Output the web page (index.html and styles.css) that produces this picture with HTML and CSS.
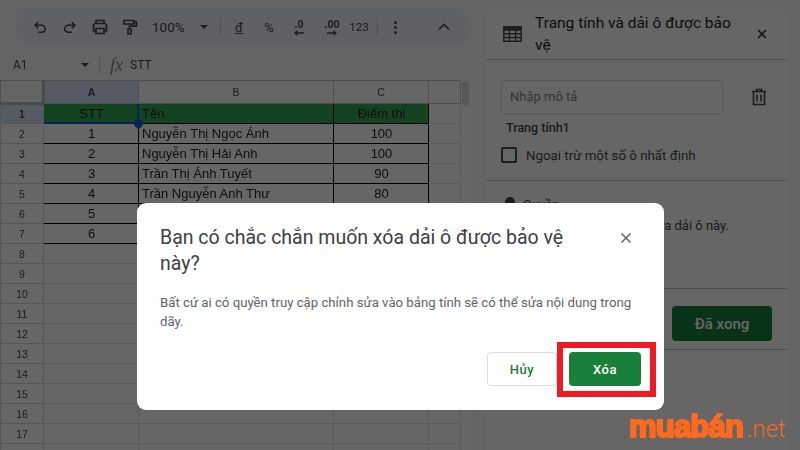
FILE: index.html
```html
<!DOCTYPE html>
<html lang="vi">
<head>
    <meta charset="UTF-8">
    <meta name="viewport" content="width=device-width, initial-scale=1.0">
    <title>Xóa dải ô được bảo vệ</title>
    <link rel="stylesheet" href="styles.css">
</head>
<body>
    <div class="app">
        <div class="sheet">
            <div class="toolbar">
                <span class="slot small"><svg viewBox="0 0 18 18"><path d="M7 3.5 3.5 7 7 10.5M4 7h7a3.500 3.500 0 0 1 0 8H7"/></svg></span>
                <span class="slot small"><svg viewBox="0 0 18 18"><path d="M11 3.5 14.5 7 11 10.5M14 7H7a3.500 3.500 0 0 0 0 8h4"/></svg></span>
                <span class="slot"><svg viewBox="0 0 18 18"><path d="M5 5V2.500h8V5M5 13H2.500V7.500A2 2 0 0 1 4.500 5.500h9a2 2 0 0 1 2 2V13H13M5 10.500h8v5H5z"/></svg></span>
                <span class="slot"><svg viewBox="0 0 18 18"><path d="M3 2.500h10v3.500H3zM13 4.200h2.500v4H8.500V11M7 11h3v5H7z"/></svg></span>
                <span class="zoom-level">100%</span>
                <span class="caret zoom-caret"></span>
                <span class="bar-line first"></span>
                <span class="slot text-tool under">đ</span>
                <span class="slot text-tool">%</span>
                <span class="slot dec"><b>.0</b><svg viewBox="0 0 12 6"><path d="M11 3H2M4.500.8 2 3l2.500 2.200"/></svg></span>
                <span class="slot dec wide"><b>.00</b><svg viewBox="0 0 12 6"><path d="M1 3h9M7.500.8 10 3 7.500 5.200"/></svg></span>
                <span class="num-tool">123</span>
                <span class="bar-line second"></span>
                <span class="more"><i></i><i></i><i></i></span>
                <span class="slot collapse"><svg viewBox="0 0 18 18"><path d="m4 11.500 5-5 5 5"/></svg></span>
            </div>

            <div class="formula">
                <span class="name-box">A1</span>
                <span class="caret"></span>
                <span class="formula-line"></span>
                <span class="fx">fx</span>
                <span class="formula-text">STT</span>
            </div>

            <div class="grid-wrap">
                <table class="grid">
                    <colgroup>
                        <col class="col-head"><col class="col-a"><col class="col-b"><col class="col-c"><col class="col-d">
                    </colgroup>
                    <thead>
                        <tr><th class="corner"></th><th class="active">A</th><th>B</th><th>C</th><th></th></tr>
                    </thead>
                    <tbody>
                        <tr class="head-row"><th class="active-row">1</th><td class="data center first selected">STT<span class="handle"></span></td><td class="data">Tên</td><td class="data center">Điểm thi</td><td></td></tr>
                        <tr><th>2</th><td class="data center first">1</td><td class="data">Nguyễn Thị Ngọc Ánh</td><td class="data center">100</td><td></td></tr>
                        <tr><th>3</th><td class="data center first">2</td><td class="data">Nguyễn Thị Hải Anh</td><td class="data center">100</td><td></td></tr>
                        <tr><th>4</th><td class="data center first">3</td><td class="data">Trần Thị Ánh Tuyết</td><td class="data center">90</td><td></td></tr>
                        <tr><th>5</th><td class="data center first">4</td><td class="data">Trần Nguyễn Anh Thư</td><td class="data center">80</td><td></td></tr>
                        <tr><th>6</th><td class="data center first">5</td><td class="data"></td><td class="data center"></td><td></td></tr>
                        <tr><th>7</th><td class="data center first">6</td><td class="data"></td><td class="data center"></td><td></td></tr>
                        <tr><th>8</th><td></td><td></td><td></td><td></td></tr>
                        <tr><th>9</th><td></td><td></td><td></td><td></td></tr>
                        <tr><th>10</th><td></td><td></td><td></td><td></td></tr>
                        <tr><th>11</th><td></td><td></td><td></td><td></td></tr>
                        <tr><th>12</th><td></td><td></td><td></td><td></td></tr>
                        <tr><th>13</th><td></td><td></td><td></td><td></td></tr>
                        <tr><th>14</th><td></td><td></td><td></td><td></td></tr>
                        <tr><th>15</th><td></td><td></td><td></td><td></td></tr>
                        <tr><th>16</th><td></td><td></td><td></td><td></td></tr>
                        <tr><th>17</th><td></td><td></td><td></td><td></td></tr>
                        <tr><th>18</th><td></td><td></td><td></td><td></td></tr>
                    </tbody>
                </table>
                <div class="scroll"><span class="thumb"></span></div>
            </div>
        </div>

        <aside class="side">
            <div class="side-head">
                <svg class="table-icon" viewBox="0 0 20 17"><path d="M0 0h20v17H0zM1.500 5v2.500h4.500V5zm6 0v2.500h5V5zm6.500 0v2.500h4.500V5zM1.500 9v2.500h4.500V9zm6 0v2.500h5V9zm6.500 0v2.500h4.500V9zM1.500 13v2.500h4.500V13zm6 0v2.500h5V13zm6.500 0v2.500h4.500V13z"/></svg>
                <h2>Trang tính và dải ô được bảo vệ</h2>
                <svg class="close" viewBox="0 0 12 12"><path d="m2 2 8 8M10 2l-8 8"/></svg>
            </div>
            <div class="side-form">
                <div class="desc-row">
                    <div class="desc-input">Nhập mô tả</div>
                    <svg class="trash" viewBox="0 0 16 18"><path d="M1 3.500h14M5.500 3.500V1.500h5v2M2.500 3.500v13h11v-13M6 6.500v7M10 6.500v7"/></svg>
                </div>
                <div class="sheet-name">Trang tính1</div>
                <label class="except"><span class="check"></span>Ngoại trừ một số ô nhất định</label>
            </div>
            <div class="side-perm">
                <div class="perm-title"><span class="lock"></span>Quyền</div>
                <p>Chỉ bạn có thể chỉnh sửa dải ô này.</p>
            </div>
            <div class="side-foot"><button class="done">Đã xong</button></div>
        </aside>
    </div>

    <div class="scrim">
        <div class="dialog">
            <div class="dialog-head">
                <h1>Bạn có chắc chắn muốn xóa dải ô được bảo vệ này?</h1>
                <svg class="dialog-close" viewBox="0 0 12 12"><path d="m1.500 1.500 9 9M10.500 1.500l-9 9"/></svg>
            </div>
            <p class="dialog-text">Bất cứ ai có quyền truy cập chỉnh sửa vào bảng tính sẽ có thể sửa nội dung trong dãy.</p>
            <div class="dialog-actions">
                <button class="btn-cancel">Hủy</button>
                <button class="btn-delete">Xóa</button>
                <span class="highlight"></span>
            </div>
        </div>
    </div>

    <div class="logo"><span class="logo-main">muabán</span><span class="logo-net">.net</span></div>
</body>
</html>
```

FILE: styles.css
```css
* {
    box-sizing: border-box;
}

html, body {
    margin: 0;
    height: 100%;
}

body {
    width: 800px;
    height: 450px;
    overflow: hidden;
    position: relative;
    background-color: #f9fbfd;
    font-family: "Liberation Sans", Arial, sans-serif;
    color: #1f1f1f;
}

.app {
    display: flex;
    height: 450px;
    filter: blur(0.4px);
}

.sheet {
    width: 471px;
    padding-top: 8px;
    flex-shrink: 0;
}

/* toolbar */
.toolbar {
    display: flex;
    align-items: center;
    height: 37px;
    margin-left: 15px;
    padding: 1px 0 0 10px;
    border-radius: 18px;
    background-color: #edf2fa;
    color: #444746;
}

.slot {
    display: flex;
    align-items: center;
    justify-content: center;
    width: 30px;
    flex-shrink: 0;
}

.slot svg {
    width: 18px;
    height: 18px;
    fill: none;
    stroke: #444746;
    stroke-width: 1.7;
}

.slot.small svg {
    width: 16px;
    height: 16px;
}

.zoom-level {
    margin-left: 7px;
    width: 36px;
    font-family: Roboto, sans-serif;
    font-size: 13.5px;
}

.caret {
    width: 0;
    height: 0;
    border-left: 4px solid transparent;
    border-right: 4px solid transparent;
    border-top: 4px solid #444746;
}

.zoom-caret {
    margin-left: 12px;
}

.bar-line {
    width: 1px;
    height: 19px;
    background-color: #c7c7c7;
}

.bar-line.first {
    margin-left: 12px;
    margin-right: 3px;
}

.bar-line.second {
    margin-left: 6px;
}

.text-tool {
    font-family: Roboto, sans-serif;
    font-size: 13px;
}

.under {
    text-decoration: underline;
}

.dec {
    position: relative;
    flex-direction: column;
}

.dec.wide {
    margin-left: 3px;
}

.dec b {
    font-size: 11px;
    line-height: 11px;
    font-weight: 700;
}

.dec svg {
    width: 12px;
    height: 6px;
    stroke-width: 1.300;
}

.num-tool {
    width: 24px;
    text-align: center;
    font-family: Roboto, sans-serif;
    font-size: 11.500px;
}

.more {
    display: flex;
    flex-direction: column;
    gap: 2px;
    margin-left: 16px;
}

.more i {
    width: 3px;
    height: 3px;
    border-radius: 50%;
    background-color: #444746;
}

.collapse {
    margin-left: 32px;
}

/* formula bar */
.formula {
    display: flex;
    align-items: center;
    height: 30px;
    margin-top: 5px;
    padding-left: 13px;
    font-size: 12px;
    color: #444746;
}

.name-box {
    width: 68px;
    font-family: Roboto, sans-serif;
}

.formula-line {
    width: 1px;
    height: 16px;
    margin-left: 10px;
    background-color: #c7c7c7;
}

.fx {
    width: 20px;
    margin-left: 10px;
    font-family: "Liberation Serif", serif;
    font-style: italic;
    font-size: 18px;
    color: #888;
}

.formula-text {
    font-family: Roboto, sans-serif;
}

/* grid */
.grid-wrap {
    display: flex;
    align-items: flex-start;
}

.grid {
    width: 460px;
    table-layout: fixed;
    border-collapse: collapse;
    background-color: #fff;
}

.col-head { width: 43px; }
.col-a { width: 95px; }
.col-b { width: 195px; }
.col-c { width: 95px; }
.col-d { width: 32px; }

.grid th, .grid td {
    padding: 0 2px;
    border: 1px solid #e1e1e1;
    height: 20px;
    white-space: nowrap;
    overflow: hidden;
    font-size: 13px;
    line-height: 18px;
}

.grid thead th {
    height: 23px;
    font-size: 10.500px;
    font-weight: 400;
    color: #444746;
    border-color: #c4c7c5;
}

.grid tbody th {
    font-size: 10.500px;
    font-weight: 400;
    color: #444746;
    border-color: #d5d5d5;
    background-color: #fff;
}

.grid .corner {
    background-color: #f8f9fa;
    border-right: 3px solid #bbb;
    border-bottom: 3px solid #bbb;
}

.grid .active {
    background-color: #d3e3fd;
    font-weight: 700;
}

.grid .active-row {
    background-color: #d3e3fd;
    font-weight: 700;
}

.grid td.data {
    border: 1px solid #000;
    padding-left: 3px;
}

.grid td.first {
    border-left-color: #d5d5d5;
}

.head-row td.data {
    border-top-color: #c4c7c5;
    background-color: #34a853;
}

.grid td.center {
    text-align: center;
}

.grid td.selected {
    position: relative;
    overflow: visible;
    box-shadow: inset -1px -1px 0 #0b57d0;
    border-right-color: #0b57d0;
    border-bottom-color: #0b57d0;
}

.handle {
    position: absolute;
    right: -5px;
    bottom: -5px;
    width: 9px;
    height: 9px;
    border-radius: 50%;
    background-color: #0b57d0;
    z-index: 1;
}

.scroll {
    width: 11px;
    height: 370px;
    padding: 1px 3px 0 1px;
    background-color: #fff;
}

.thumb {
    display: block;
    width: 7px;
    height: 25px;
    border-radius: 4px;
    background-color: #dadce0;
}

/* side panel */
.side {
    width: 301px;
    height: 442px;
    margin: 8px 0 0 15px;
    border-radius: 8px 8px 0 0;
    background-color: #fff;
}

.side-head {
    display: flex;
    align-items: center;
    height: 52px;
    padding: 0 19px 0 17px;
    border-bottom: 1px solid #c4c7c5;
}

.table-icon {
    width: 19px;
    height: 16px;
    margin-right: 13px;
    flex-shrink: 0;
    fill: #444746;
    fill-rule: evenodd;
}

.side-head h2 {
    margin: 0;
    width: 205px;
    font-family: Roboto, sans-serif;
    font-size: 15.500px;
    font-weight: 400;
    line-height: 22px;
}

.close {
    width: 12px;
    height: 12px;
    margin-left: 16px;
    fill: none;
    stroke: #1f1f1f;
    stroke-width: 1.500;
}

.side-form {
    height: 121px;
    padding: 20px 15px 0;
    border-bottom: 1px solid #c4c7c5;
}

.desc-row {
    display: flex;
    align-items: center;
}

.desc-input {
    width: 222px;
    height: 34px;
    padding-left: 8px;
    border: 1px solid #dadce0;
    border-radius: 4px;
    font-family: Roboto, sans-serif;
    font-size: 13px;
    line-height: 31px;
    color: #80868b;
}

.trash {
    width: 16px;
    height: 18px;
    margin-left: 28px;
    fill: none;
    stroke: #444746;
    stroke-width: 1.600;
}

.sheet-name {
    margin: 5px 0 0 5px;
    font-family: Roboto, sans-serif;
    font-size: 12.500px;
    font-weight: 500;
    line-height: 18px;
    color: #444746;
}

.except {
    display: flex;
    align-items: center;
    margin-top: 10px;
    font-family: Roboto, sans-serif;
    font-size: 13.300px;
    color: #444746;
}

.check {
    width: 16px;
    height: 16px;
    margin-right: 9px;
    border: 2px solid #444746;
    border-radius: 2px;
}

.side-perm {
    height: 108px;
    padding: 15px 19px 0;
    border-bottom: 1px solid #c4c7c5;
    font-family: Roboto, sans-serif;
    font-size: 13px;
    color: #444746;
}

.perm-title {
    display: flex;
    align-items: center;
    gap: 8px;
    height: 16px;
}

.lock {
    width: 10px;
    height: 14px;
    border-radius: 5px;
    background-color: #444746;
}

.side-perm p {
    margin: 6px 0 0;
    width: 224px;
    white-space: nowrap;
    text-align: right;
}

.side-foot {
    display: flex;
    justify-content: flex-end;
    align-items: flex-start;
    height: 61px;
    padding: 17px 15px 0 0;
    border-bottom: 1px solid #c4c7c5;
}

.done {
    width: 100px;
    height: 35px;
    border: none;
    border-radius: 4px;
    background-color: #188038;
    color: #fff;
    font-family: Roboto, sans-serif;
    font-size: 15px;
    font-weight: 500;
}

/* dialog */
.scrim {
    position: absolute;
    inset: 0;
    display: flex;
    justify-content: center;
    align-items: flex-start;
    padding: 203px 0 0 1px;
    background: rgba(0,0,0,0.6);
}

.dialog {
    width: 527px;
    height: 207px;
    padding: 22px 23px 0;
    border-radius: 9px;
    background-color: #fff;
}

.dialog-head {
    display: flex;
    align-items: flex-start;
}

.dialog-head h1 {
    margin: 0;
    width: 445px;
    font-family: Roboto, sans-serif;
    font-size: 19.500px;
    font-weight: 400;
    line-height: 26px;
    color: #3c4043;
}

.dialog-close {
    width: 12px;
    height: 12px;
    margin: 7px 0 0 15px;
    fill: none;
    stroke: #5f6368;
    stroke-width: 1.500;
}

.dialog-text {
    margin: 16px 0 0;
    width: 480px;
    font-family: Roboto, sans-serif;
    font-size: 13.200px;
    line-height: 19px;
    color: #5f6368;
}

.dialog-actions {
    position: relative;
    display: flex;
    justify-content: flex-end;
    gap: 12px;
    margin-top: 21px;
}

.dialog-actions button {
    height: 34px;
    border-radius: 4px;
    font-family: Roboto, sans-serif;
    font-size: 13px;
    font-weight: 500;
    letter-spacing: 0.5px;
}

.btn-cancel {
    width: 70px;
    border: 1px solid #dadce0;
    background-color: #fff;
    color: #188038;
}

.btn-delete {
    width: 72px;
    border: none;
    background-color: #188038;
    color: #fff;
}

.highlight {
    position: absolute;
    top: -10px;
    right: -15px;
    width: 99px;
    height: 55px;
    border: 6px solid #ed1c24;
}

/* watermark */
.logo {
    position: absolute;
    left: 629px;
    top: 409px;
    display: flex;
    align-items: baseline;
    color: #ff6a1f;
    white-space: nowrap;
}

.logo-main {
    width: 118px;
    font-size: 31px;
    font-weight: 700;
    letter-spacing: -0.800px;
    -webkit-text-stroke: 2px #ff6a1f;
}

.logo-net {
    font-family: Roboto, sans-serif;
    font-size: 24px;
    font-weight: 300;
}
```
